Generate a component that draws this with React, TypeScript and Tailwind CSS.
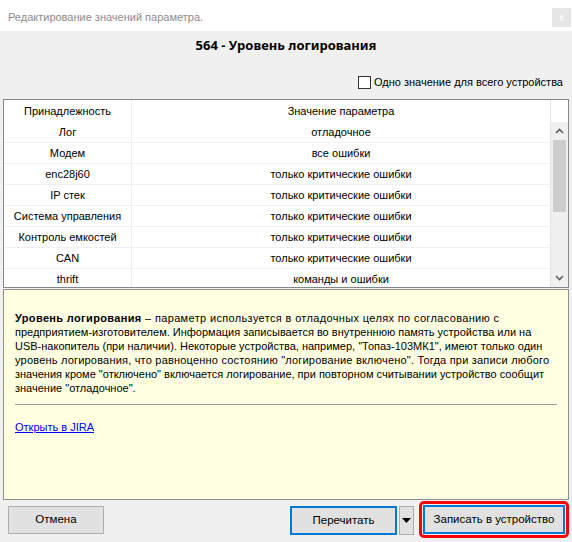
import React from "react";

const rows: [string, string][] = [
  ["Лог", "отладочное"],
  ["Модем", "все ошибки"],
  ["enc28j60", "только критические ошибки"],
  ["IP стек", "только критические ошибки"],
  ["Система управления", "только критические ошибки"],
  ["Контроль емкостей", "только критические ошибки"],
  ["CAN", "только критические ошибки"],
  ["thrift", "команды и ошибки"],
];

const ui = "font-['Segoe_UI','Liberation_Sans',sans-serif]";
const tahoma = "font-['Tahoma','Liberation_Sans',sans-serif]";

function ScrollBar() {
  return (
    <div className="flex w-[18px] flex-col border-l border-[#e3e3e3]">
      <div className="h-[22px] bg-white" />
      <div className="flex flex-1 flex-col bg-[#f0f0f0]">
        <div className="flex h-[18px] items-center justify-center">
          <svg width="9" height="6" viewBox="0 0 9 6">
            <path d="M1 5 L4.5 1.5 L8 5" fill="none" stroke="#606060" strokeWidth="1.6" />
          </svg>
        </div>
        <div className="mx-[2px] h-[72px] bg-[#cdcdcd]" />
        <div className="flex-1" />
        <div className="flex h-[18px] items-center justify-center">
          <svg width="9" height="6" viewBox="0 0 9 6">
            <path d="M1 1 L4.5 4.5 L8 1" fill="none" stroke="#606060" strokeWidth="1.6" />
          </svg>
        </div>
      </div>
    </div>
  );
}

export default function App() {
  return (
    <div className={`flex h-[542px] w-[572px] flex-col bg-[#f0f0f0] text-black ${ui}`}>
      <div className="flex h-[31px] items-start justify-between bg-white pr-[1px]">
        <span className="mt-[9px] pl-[8px] text-[11px] text-[#8c8c8c]">
          Редактирование значений параметра.
        </span>
        <div className="mt-[8px] flex h-[19px] w-[19px] items-center justify-center bg-[#e6e6e6] text-[10px] leading-none text-white">
          x
        </div>
      </div>

      <div className="flex h-[29px] items-center justify-center pt-[1px] font-['Noto_Sans',sans-serif] text-[13px] font-bold">
        564 - Уровень логирования
      </div>

      <div className="flex h-[39px] items-center justify-end gap-[3px] pr-[9px] pt-[5px]">
        <div className="h-[13px] w-[13px] border border-[#333333] bg-white" />
        <span className="text-[11px]">Одно значение для всего устройства</span>
      </div>

      <div className="mx-[3px] flex h-[189px] overflow-hidden border border-[#828790] bg-white text-[11px]">
        <div className="flex flex-1 flex-col">
          <div className="flex h-[22px] shrink-0">
            <div className="flex w-[128px] items-center justify-center border-r border-[#efefef]">
              Принадлежность
            </div>
            <div className="flex flex-1 items-center justify-center">Значение параметра</div>
          </div>
          {rows.map(([a, b]) => (
            <div key={a} className="flex h-[21px] shrink-0 border-b border-[#efefef]">
              <div className="flex w-[128px] items-center justify-center border-r border-[#efefef]">
                {a}
              </div>
              <div className="flex flex-1 items-center justify-center">{b}</div>
            </div>
          ))}
        </div>
        <ScrollBar />
      </div>

      <div
        className={`mx-[3px] mt-[1px] h-[211px] border border-[#8f8f8f] bg-[#ffffe1] pl-[11px] pr-[11px] pt-[21px] text-[11px] leading-[14px] ${tahoma}`}
      >
        <p className="whitespace-nowrap">
          <span className="tracking-[0.35px]">
            <b>Уровень логирования</b> – параметр используется в отладочных целях по согласованию с
          </span>
          <br />
          предприятием-изготовителем. Информация записывается во внутреннюю память устройства или на
          <br />
          USB-накопитель (при наличии). Некоторые устройства, например, "Топаз-103МК1", имеют только один
          <br />
          <span className="tracking-[0.2px]">
            уровень логирования, что равноценно состоянию "логирование включено". Тогда при записи любого
          </span>
          <br />
          значения кроме "отключено" включается логирование, при повторном считывании устройство сообщит
          <br />
          значение "отладочное".
        </p>
        <div className="mt-[9px] h-[1px] bg-[#a0a0a0]" />
        <a className="mt-[15px] block text-[#0000ff] underline">Открыть в JIRA</a>
      </div>

      <div className="flex flex-1 items-start pl-[8px] pr-[3px] pt-[6px] text-[11.5px]">
        <button className="flex h-[28px] w-[96px] items-center justify-center border border-[#adadad] bg-[#e1e1e1]">
          Отмена
        </button>
        <div className="flex-1" />
        <button className="flex h-[29px] w-[107px] items-center justify-center border-2 border-[#0078d7] bg-[#e1e1e1]">
          Перечитать
        </button>
        <button className="ml-[2px] flex h-[29px] w-[15px] items-center justify-center border border-[#adadad] bg-[#e1e1e1]">
          <svg width="9" height="5" viewBox="0 0 9 5">
            <path d="M0 0 H9 L4.5 5 Z" fill="#000" />
          </svg>
        </button>
        <div className="ml-[5px] -mt-[5px] rounded-[5px] border-[3px] border-[#ff0000] p-[1px]">
          <button className="flex h-[29px] w-[142px] items-center justify-center border-2 border-[#0078d7] bg-[#e1e1e1]">
            Записать в устройство
          </button>
        </div>
      </div>
    </div>
  );
}
